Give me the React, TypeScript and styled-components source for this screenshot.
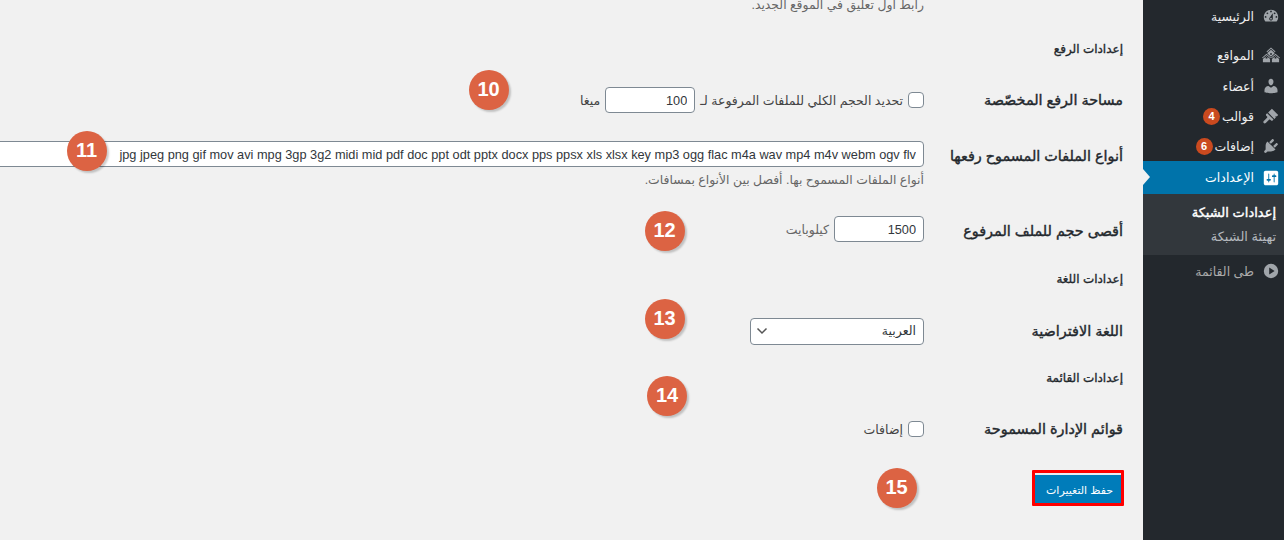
import React from "react";
import styled, { createGlobalStyle } from "styled-components";

const Global = createGlobalStyle`
  html, body { margin: 0; padding: 0; height: 540px; overflow: hidden; background: #f1f1f1; }
  body { font-family: "Liberation Sans", "DejaVu Sans", sans-serif; }
`;

const Page = styled.div`
  position: relative; display: flex; flex-direction: row; width: 1284px; height: 540px;
  overflow: hidden; background: #f1f1f1; color: #444; font-size: 12.5px;
`;
const Sidebar = styled.nav`
  flex: 0 0 141px; height: 540px; background: #23282d; display: flex; flex-direction: column; padding-top: 1px; box-sizing: border-box;
`;
const MenuItem = styled.div<{ $mt?: number; $active?: boolean; $muted?: boolean }>`
  position: relative; display: flex; align-items: center; gap: 0;
  height: ${p => (p.$active ? 33 : 30)}px; margin-top: ${p => p.$mt ?? 0}px; padding-right: 4px;
  background: ${p => (p.$active ? "#0073aa" : "transparent")};
  color: ${p => (p.$active ? "#fff" : p.$muted ? "#aaa" : "#eee")}; font-size: 12.5px; white-space: nowrap;
`;
const IconBox = styled.svg<{ $active?: boolean }>`
  width: 18px; height: 18px; flex: none; margin-left: 8px; fill: ${p => (p.$active ? "#fff" : "#a0a5aa")};
`;
const Count = styled.span`
  display: inline-flex; align-items: center; justify-content: center; width: 17px; height: 17px; border-radius: 50%;
  background: #ca4a1f; color: #fff; font-size: 11px; font-weight: 700; margin-right: 2px;
`;
const ActiveArrow = styled.span`
  position: absolute; left: 0; top: 8px; width: 0; height: 0;
  border-top: 8px solid transparent; border-bottom: 8px solid transparent; border-left: 7px solid #f1f1f1;
`;
const SubList = styled.div`
  height: 61px; background: #32373c; display: flex; flex-direction: column; padding: 7px 8px 0 0; box-sizing: border-box; margin-bottom: 1px;
`;
const SubItem = styled.div<{ $current?: boolean }>`
  height: 24px; line-height: 24px; font-size: 13px; white-space: nowrap;
  color: ${p => (p.$current ? "#fff" : "#b4b9be")};
  -webkit-text-stroke: ${p => (p.$current ? "0.4px #fff" : "0")};
`;

const Main = styled.main`
  flex: 1; min-width: 0; padding-right: 20px; display: flex; flex-direction: column; box-sizing: border-box;
`;
const HintLine = styled.p<{ $mt: number }>`
  margin: ${p => p.$mt}px 199px 0 0; height: 20px; line-height: 20px; font-size: 12.4px; color: #666; white-space: nowrap;
`;
const SectionTitle = styled.h2<{ $mt: number }>`
  margin: ${p => p.$mt}px 0 0; height: 20px; line-height: 20px; font-size: 12px; font-weight: 400; color: #23282d;
  -webkit-text-stroke: 0.35px #23282d;
`;
const Row = styled.div<{ $mt: number }>`
  display: flex; align-items: center; height: 26px; margin-top: ${p => p.$mt}px;
`;
const Label = styled.label<{ $low?: boolean }>`
  flex: 0 0 199px; font-size: 14.4px; font-weight: 400; color: #23282d; white-space: nowrap; line-height: 26px;
  padding-top: ${p => (p.$low ? 3 : 0)}px; box-sizing: border-box;
  -webkit-text-stroke: 0.4px #23282d;
`;
const Field = styled.div`
  display: flex; align-items: center; gap: 5px; font-size: 12.5px; color: #444; white-space: nowrap;
`;
const Text = styled.span<{ $muted?: boolean }>`color: ${p => (p.$muted ? "#666" : "#444")};`;
const Input = styled.input<{ $w: number }>`
  flex: none; width: ${p => p.$w}px; height: 26px; box-sizing: border-box; padding: 0 7px; border: 1px solid #7e8993; border-radius: 4px;
  background: #fff; color: #32373c; font: 12.75px "Liberation Sans", sans-serif; text-align: right; outline: none; margin: 0;
`;
const Check = styled.input`
  appearance: none; flex: none; width: 16px; height: 16px; margin: 0; border: 1px solid #7e8993; border-radius: 4px; background: #fff; box-sizing: border-box;
`;
const SelectWrap = styled.div`position: relative; width: 174px; height: 27px;`;
const Select = styled.select`
  appearance: none; width: 100%; height: 100%; box-sizing: border-box; padding: 0 7px; border: 1px solid #7e8993; border-radius: 4px;
  background: #fff; color: #32373c; font: 12.5px "Liberation Sans", "DejaVu Sans", sans-serif; outline: none; margin: 0;
`;
const Chevron = styled.svg`
  position: absolute; left: 6px; top: 8px; width: 12px; height: 10px; fill: none; stroke: #555; stroke-width: 1.5; pointer-events: none;
`;
const SubmitFrame = styled.div`
  width: 92px; height: 36px; margin: 28px -1px 0 0; border: 3px solid #f00; box-sizing: border-box; border-radius: 1px; flex: none; align-self: flex-start;
`;
const SubmitButton = styled.button`
  display: block; width: 100%; height: 100%; padding: 3px 0 0 3px; border: 0; border-top: 2px solid #e8eef2; background: #007cba; color: #fff; font: 11px "Liberation Sans", "DejaVu Sans", sans-serif; white-space: nowrap;
`;
const Marker = styled.div<{ $x: number; $y: number }>`
  position: absolute; left: ${p => p.$x - 20}px; top: ${p => p.$y - 20}px; width: 40px; height: 40px; border-radius: 50%;
  background: #dc6343; color: #fff; font: 700 20px/38px "Liberation Sans", sans-serif; text-align: center; direction: ltr;
  box-shadow: 2px 2px 2px rgba(0,0,0,.2);
`;

const ICONS = {
  dash: "M3.76 16h12.48c1.1-1.37 1.76-3.11 1.76-5 0-4.42-3.58-8-8-8s-8 3.58-8 8c0 1.89.66 3.63 1.76 5zM10 4c.55 0 1 .45 1 1s-.45 1-1 1-1-.45-1-1 .45-1 1-1zM6 6c.55 0 1 .45 1 1s-.45 1-1 1-1-.45-1-1 .45-1 1-1zm8 0c.55 0 1 .45 1 1s-.45 1-1 1-1-.45-1-1 .45-1 1-1zm-5.37 5.55L12 7v6c0 1.1-.9 2-2 2s-2-.9-2-2c0-.57.24-1.08.63-1.45zM4 10c.55 0 1 .45 1 1s-.45 1-1 1-1-.45-1-1 .45-1 1-1zm12 0c.55 0 1 .45 1 1s-.45 1-1 1-1-.45-1-1 .45-1 1-1zm-5 3c0-.55-.45-1-1-1s-1 .45-1 1 .45 1 1 1 1-.45 1-1z",
  sites: "M14.27 6.87L10 3.14 5.73 6.87 5 6.14l5-4.38 5 4.38zM14 8.42l-4.05 3.43L6 8.38v-.74l4-3.5 4 3.5zM11 9.7V8H9v1.7zm-1.73 4.03L5 10 .73 13.73 0 13l5-4.38L10 13zm10 0L15 10l-4.27 3.73L10 13l5-4.38L20 13zM5 11l4 3.5V18H1v-3.5zm10 0l4 3.5V18h-8v-3.5zM6 14v-2H4v2zm10 0v-2h-2v2z",
  users: "M10 9.25c-2.27 0-2.73-3.44-2.73-3.44C7 4.02 7.82 2 9.97 2c2.16 0 2.98 2.02 2.71 3.81 0 0-.41 3.44-2.68 3.44zm0 2.57L12.72 10c2.39 0 4.52 2.33 4.52 4.53v2.49s-3.65 1.13-7.24 1.13c-3.65 0-7.24-1.13-7.24-1.13v-2.49c0-2.25 1.94-4.48 4.47-4.48z",
  brush: "M11 2l7 7-1.6 1.6-1.4-.6.3 1.7-1.5 1.5-7-7zM5.8 7l7 7-1 1c-.5.5-1.2.4-1.7 0l-.9-.9c-.4-.4-1-.4-1.4 0l-3.6 3.6c-.7.7-1.7.7-2.3.1s-.6-1.6.1-2.3l3.6-3.6c.4-.4.4-1 0-1.4l-.9-.9c-.4-.5-.5-1.2 0-1.7z",
  plugin: "M13.11 4.36L9.87 7.6 8 5.73l3.24-3.24c.35-.34 1.05-.2 1.56.32.52.51.66 1.21.31 1.55zm-8 1.77l.91-1.12 9.01 9.01-1.19.84c-.71.71-2.63 1.16-3.82 1.16H6.14L4.9 17.26c-.59.59-1.54.59-2.12 0-.59-.58-.59-1.53 0-2.12l1.24-1.24v-3.88c0-1.13.4-3.19 1.09-3.89zm7.26 3.97l3.24-3.24c.34-.35 1.04-.21 1.55.31.52.51.66 1.21.31 1.55l-3.24 3.25z",
  settings: "M18 16V4c0-1.1-.9-2-2-2H4c-1.1 0-2 .9-2 2v12c0 1.1.9 2 2 2h12c1.1 0 2-.9 2-2zM8 11h1c.55 0 1 .45 1 1s-.45 1-1 1H8v1.5c0 .28-.22.5-.5.5s-.5-.22-.5-.5V13H6c-.55 0-1-.45-1-1s.45-1 1-1h1V5.5c0-.28.22-.5.5-.5s.5.22.5.5V11zm5-2h-1c-.55 0-1-.45-1-1s.45-1 1-1h1V5.5c0-.28.22-.5.5-.5s.5.22.5.5V7h1c.55 0 1 .45 1 1s-.45 1-1 1h-1v5.5c0 .28-.22.5-.5.5s-.5-.22-.5-.5V9z",
  collapse: "M10 2a8 8 0 1 0 0 16 8 8 0 0 0 0-16zM8 6l6 4-6 4z",
};

const Icon = ({ d, active }: { d: string; active?: boolean }) => (
  <IconBox viewBox="0 0 20 20" $active={active} aria-hidden="true"><path d={d} fillRule="evenodd" /></IconBox>
);

const FILE_TYPES = "jpg jpeg png gif mov avi mpg 3gp 3g2 midi mid pdf doc ppt odt pptx docx pps ppsx xls xlsx key mp3 ogg flac m4a wav mp4 m4v webm ogv flv";

const MARKERS: Array<[string, number, number]> = [
  ["10", 488.5, 90], ["11", 86.5, 150.5], ["12", 664.5, 230.5], ["13", 664.5, 318.5], ["14", 667, 396], ["15", 896.5, 488],
];

export default function App() {
  return (
    <Page dir="rtl">
      <Global />
      <Sidebar>
        <MenuItem><Icon d={ICONS.dash} />الرئيسية</MenuItem>
        <MenuItem $mt={9}><Icon d={ICONS.sites} />المواقع</MenuItem>
        <MenuItem $mt={1}><Icon d={ICONS.users} />أعضاء</MenuItem>
        <MenuItem><Icon d={ICONS.brush} />قوالب<Count>4</Count></MenuItem>
        <MenuItem><Icon d={ICONS.plugin} />إضافات<Count>6</Count></MenuItem>
        <MenuItem $active><ActiveArrow /><Icon d={ICONS.settings} active />الإعدادات</MenuItem>
        <SubList>
          <SubItem $current>إعدادات الشبكة</SubItem>
          <SubItem>تهيئة الشبكة</SubItem>
        </SubList>
        <MenuItem $muted><Icon d={ICONS.collapse} />طى القائمة</MenuItem>
      </Sidebar>
      <Main>
        <HintLine $mt={-5}>رابط أول تعليق في الموقع الجديد.</HintLine>
        <SectionTitle $mt={24}>إعدادات الرفع</SectionTitle>
        <Row $mt={28}>
          <Label>مساحة الرفع المخصّصة</Label>
          <Field>
            <Check type="checkbox" />
            <Text>تحديد الحجم الكلي للملفات المرفوعة لـ</Text>
            <Input $w={90} defaultValue="100" />
            <Text>ميغا</Text>
          </Field>
        </Row>
        <Row $mt={28}>
          <Label $low>أنواع الملفات المسموح رفعها</Label>
          <Field><Input $w={1000} dir="ltr" defaultValue={FILE_TYPES} /></Field>
        </Row>
        <HintLine $mt={3}>أنواع الملفات المسموح بها. أفصل بين الأنواع بمسافات.</HintLine>
        <Row $mt={26}>
          <Label $low>أقصى حجم للملف المرفوع</Label>
          <Field>
            <Input $w={90} defaultValue="1500" />
            <Text $muted>كيلوبايت</Text>
          </Field>
        </Row>
        <SectionTitle $mt={27}>إعدادات اللغة</SectionTitle>
        <Row $mt={29}>
          <Label>اللغة الافتراضية</Label>
          <SelectWrap>
            <Select defaultValue="ar"><option value="ar">العربية</option></Select>
            <Chevron viewBox="0 0 12 10"><path d="M1.5 2.5 6 7l4.5-4.5" /></Chevron>
          </SelectWrap>
        </Row>
        <SectionTitle $mt={24}>إعدادات القائمة</SectionTitle>
        <Row $mt={28}>
          <Label>قوائم الإدارة المسموحة</Label>
          <Field>
            <Check type="checkbox" />
            <Text>إضافات</Text>
          </Field>
        </Row>
        <SubmitFrame><SubmitButton type="button">حفظ التغييرات</SubmitButton></SubmitFrame>
      </Main>
      {MARKERS.map(([n, x, y]) => <Marker key={n} $x={x} $y={y}>{n}</Marker>)}
    </Page>
  );
}
